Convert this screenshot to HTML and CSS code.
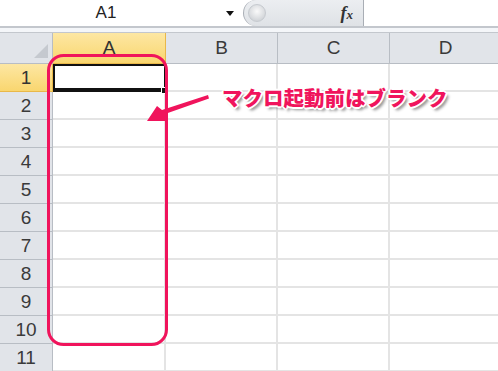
FILE: index.html
```html
<!DOCTYPE html>
<html lang="ja">
<head>
    <meta charset="UTF-8">
    <title>Sheet</title>
    <link rel="stylesheet" href="styles.css">
</head>
<body>
    <div class="sheet">
        <div class="formulaBar">
            <div class="nameBox">
                <span class="nameText">A1</span>
                <span class="nameArrow"></span>
            </div>
            <div class="fxBox">
                <span class="knob"></span>
                <span class="fx">f<small>x</small></span>
            </div>
            <div class="formulaInput"></div>
        </div>
        <div class="strip"></div>

        <div class="grid">
            <div class="corner"><span class="cornerMark"></span></div>
            <div class="colHead active">A</div>
            <div class="colHead">B</div>
            <div class="colHead">C</div>
            <div class="colHead">D</div>

            <div class="rowHead active">1</div>
            <div class="cell sel"></div><div class="cell"></div><div class="cell"></div><div class="cell"></div>
            <div class="rowHead">2</div>
            <div class="cell"></div><div class="cell"></div><div class="cell"></div><div class="cell"></div>
            <div class="rowHead">3</div>
            <div class="cell"></div><div class="cell"></div><div class="cell"></div><div class="cell"></div>
            <div class="rowHead">4</div>
            <div class="cell"></div><div class="cell"></div><div class="cell"></div><div class="cell"></div>
            <div class="rowHead">5</div>
            <div class="cell"></div><div class="cell"></div><div class="cell"></div><div class="cell"></div>
            <div class="rowHead">6</div>
            <div class="cell"></div><div class="cell"></div><div class="cell"></div><div class="cell"></div>
            <div class="rowHead">7</div>
            <div class="cell"></div><div class="cell"></div><div class="cell"></div><div class="cell"></div>
            <div class="rowHead">8</div>
            <div class="cell"></div><div class="cell"></div><div class="cell"></div><div class="cell"></div>
            <div class="rowHead">9</div>
            <div class="cell"></div><div class="cell"></div><div class="cell"></div><div class="cell"></div>
            <div class="rowHead">10</div>
            <div class="cell"></div><div class="cell"></div><div class="cell"></div><div class="cell"></div>
            <div class="rowHead">11</div>
            <div class="cell"></div><div class="cell"></div><div class="cell"></div><div class="cell"></div>
        </div>

        <!-- 注釈: 枠と矢印 -->
        <svg class="marks" width="498" height="371" viewBox="0 0 498 371">
            <rect x="48.5" y="55.5" width="118" height="289" rx="15" ry="15" fill="none" stroke="#f0145c" stroke-width="3"/>
            <polygon points="208,95 209,98.5 165,114 166,121 147,121 157,106 162,110" fill="#f0145c"/>
        </svg>
        <div class="note">マクロ起動前はブランク</div>
    </div>
</body>
</html>
```

FILE: styles.css
```css
body {
    margin: 0;
    padding: 0;
    background: #fff;
    font-family: "Liberation Sans", Arial, sans-serif;
}
.sheet {
    position: relative;
    width: 498px;
    height: 371px;
    overflow: hidden;
}
.formulaBar {
    display: flex;
    height: 26px;
    border-bottom: 2px solid #c3c7cd;
}
.nameBox {
    display: flex;
    align-items: center;
    width: 243px;
    background: #fff;
}
.nameText {
    width: 212px;
    text-align: center;
    font-size: 17px;
    color: #222;
}
.nameArrow {
    margin-left: 14px;
    width: 0;
    height: 0;
    border-left: 4px solid transparent;
    border-right: 4px solid transparent;
    border-top: 5px solid #111;
}
.fxBox {
    display: flex;
    align-items: center;
    justify-content: space-between;
    width: 121px;
    padding: 0 10px 0 4px;
    box-sizing: border-box;
    background: linear-gradient(#eceef1, #dfe2e6);
    border: 1px solid #a9aeb5;
    border-top: none;
    border-bottom: none;
    border-radius: 14px 0 0 14px;
}
.knob {
    width: 16px;
    height: 16px;
    border-radius: 50%;
    background: radial-gradient(circle at 50% 40%, #fafafa, #c4c8cd);
    border: 1px solid #c6cacf;
}
.fx {
    font-family: "Liberation Serif", serif;
    font-style: italic;
    font-weight: bold;
    font-size: 18px;
    color: #333;
}
.fx small {
    font-size: 13px;
}
.formulaInput {
    flex: 1;
    background: #fff;
}
.strip {
    height: 4px;
    background: #f4f6f9;
    border-bottom: 1px solid #c3c7cd;
}
.grid {
    display: grid;
    grid-template-columns: 53px 113px 112px 112px 112px;
    grid-template-rows: 31px repeat(11, 28px);
}
.corner,
.colHead,
.rowHead {
    box-sizing: border-box;
    background: #e1e4e9;
    border-right: 1px solid #b8bdc4;
    border-bottom: 1px solid #b8bdc4;
    color: #3a3a3a;
    font-size: 19px;
    display: flex;
    align-items: center;
    justify-content: center;
}
.corner {
    position: relative;
}
.cornerMark {
    position: absolute;
    right: 4px;
    bottom: 5px;
    width: 0;
    height: 0;
    border-left: 14px solid transparent;
    border-bottom: 14px solid #c5c9cf;
}
.colHead.active,
.rowHead.active {
    background: linear-gradient(#fde7a3, #f9d66f);
    border-color: #e9b849;
    color: #333;
}
.cell {
    box-sizing: border-box;
    border-right: 2px solid #e4e4e4;
    border-bottom: 2px solid #e4e4e4;
}
.cell.sel {
    position: relative;
    border: 2px solid #111;
    border-bottom-width: 4px;
}
.cell.sel::after {
    content: "";
    position: absolute;
    right: -4px;
    bottom: -6px;
    width: 5px;
    height: 5px;
    background: #111;
    border: 1px solid #fff;
}
.marks {
    position: absolute;
    left: 0;
    top: 0;
}
.note {
    position: absolute;
    left: 222px;
    top: 86px;
    font-family: "Noto Sans CJK JP", sans-serif;
    font-weight: 900;
    font-size: 20.5px;
    line-height: 22px;
    color: #f0145c;
    white-space: nowrap;
    text-shadow: -1px -1px 0 #fff, 1px -1px 0 #fff, -1px 1px 0 #fff, 1px 1px 0 #fff,
        0 -2px 0 #fff, 0 2px 0 #fff, -2px 0 0 #fff, 2px 0 0 #fff,
        3px 3px 3px rgba(0, 0, 0, 0.45);
}
```
